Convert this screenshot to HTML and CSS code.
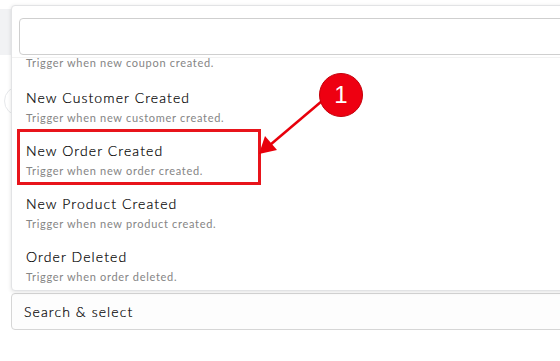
FILE: index.html
```html
<!DOCTYPE html>
<html lang="en">

<head>
    <meta charset="UTF-8">
    <meta name="viewport" content="width=device-width, initial-scale=1.0">
    <title>Trigger select</title>
    <link rel="stylesheet" href="styles.css">
</head>

<body>
    <div class="page">
        <div class="backdrop">
            <div class="backdrop-bar"></div>
            <div class="backdrop-avatar"></div>
        </div>

        <div class="dropdown">
            <div class="search">
                <input type="text" class="search-input">
            </div>
            <ul class="options">
                <!-- list is scrolled: only the tail of the coupon option shows -->
                <li class="option option-partial">
                    <div class="option-desc">Trigger when new coupon created.</div>
                </li>
                <li class="option">
                    <div class="option-title">New Customer Created</div>
                    <div class="option-desc">Trigger when new customer created.</div>
                </li>
                <li class="option">
                    <div class="option-title">New Order Created</div>
                    <div class="option-desc">Trigger when new order created.</div>
                </li>
                <li class="option">
                    <div class="option-title">New Product Created</div>
                    <div class="option-desc">Trigger when new product created.</div>
                </li>
                <li class="option">
                    <div class="option-title">Order Deleted</div>
                    <div class="option-desc">Trigger when order deleted.</div>
                </li>
            </ul>
        </div>

        <div class="select">Search &amp; select</div>

        <!-- annotation -->
        <div class="highlight"></div>
        <svg class="arrow" width="560" height="361" viewBox="0 0 560 361">
            <line x1="322" y1="101" x2="270" y2="145" stroke="#e8000b" stroke-width="2.5" />
            <polygon points="259,154 265,136 277,150" fill="#e8000b" />
        </svg>
        <div class="badge">1</div>
    </div>
</body>

</html>
```

FILE: styles.css
```css
* {
    box-sizing: border-box;
}

body {
    margin: 0;
    background-color: #fff;
    font-family: Lato, "Noto Sans", sans-serif;
    color: #2b2b2b;
}

.page {
    position: relative;
    width: 560px;
    height: 361px;
    overflow: hidden;
    padding: 293px 0 0 11px;
}

.backdrop-bar {
    position: absolute;
    top: 9px;
    left: 0;
    width: 40px;
    height: 46px;
    background-color: #f1f2f4;
}

.backdrop-avatar {
    position: absolute;
    top: 86px;
    left: 4px;
    width: 30px;
    height: 30px;
    border: 1px solid #e6e8eb;
    border-radius: 50%;
}

.dropdown {
    position: absolute;
    top: 5px;
    left: 11px;
    z-index: 1;
    width: 580px;
    height: 286px;
    border: 1px solid #e2e3e5;
    border-radius: 4px;
    background-color: #fff;
    box-shadow: 0 1px 4px 0 rgba(0, 0, 0, .12);
    overflow: hidden;
}

.search {
    padding: 12px 0 2px 7px;
}

.search-input {
    display: block;
    width: 100%;
    height: 37px;
    border: 1px solid #cfcfcf;
    border-radius: 4px;
    outline: none;
}

.options {
    height: 234px;
    margin: 0;
    padding: 0;
    list-style: none;
    overflow: hidden;
    border-top: 1px solid #f2f2f2;
}

.option {
    height: 53px;
    padding: 10px 0 0 14px;
}

.option-partial {
    height: 23px;
    margin-top: -3px;
    padding-top: 0;
}

.option-partial .option-desc {
    margin-top: 0;
}

.option-title {
    font-size: 14px;
    font-weight: 300;
    line-height: 20px;
    letter-spacing: 1.1px;
    color: #000;
    -webkit-text-stroke: .2px #000;
}

.option-desc {
    margin-top: 2px;
    font-size: 11px;
    line-height: 16px;
    letter-spacing: .7px;
    color: #858585;
}

.select {
    width: 560px;
    height: 37px;
    padding: 0 12px;
    border: 1px solid #d6d6d6;
    border-radius: 4px;
    background-color: #fdfdfd;
    font-size: 14px;
    font-weight: 300;
    line-height: 35px;
    letter-spacing: 1.1px;
    color: #000;
    -webkit-text-stroke: .2px #000;
}

.highlight {
    position: absolute;
    top: 129px;
    left: 17px;
    z-index: 2;
    width: 244px;
    height: 56px;
    border: 3px solid #e8141b;
}

.arrow {
    position: absolute;
    top: 0;
    left: 0;
    z-index: 2;
}

.badge {
    position: absolute;
    top: 73px;
    left: 319px;
    z-index: 3;
    width: 44px;
    height: 44px;
    border: 1px solid #c4000a;
    border-radius: 50%;
    background-color: #ee0011;
    font-family: "Liberation Sans", Arial, sans-serif;
    font-size: 24px;
    line-height: 42px;
    text-align: center;
    color: #fff;
}
```
